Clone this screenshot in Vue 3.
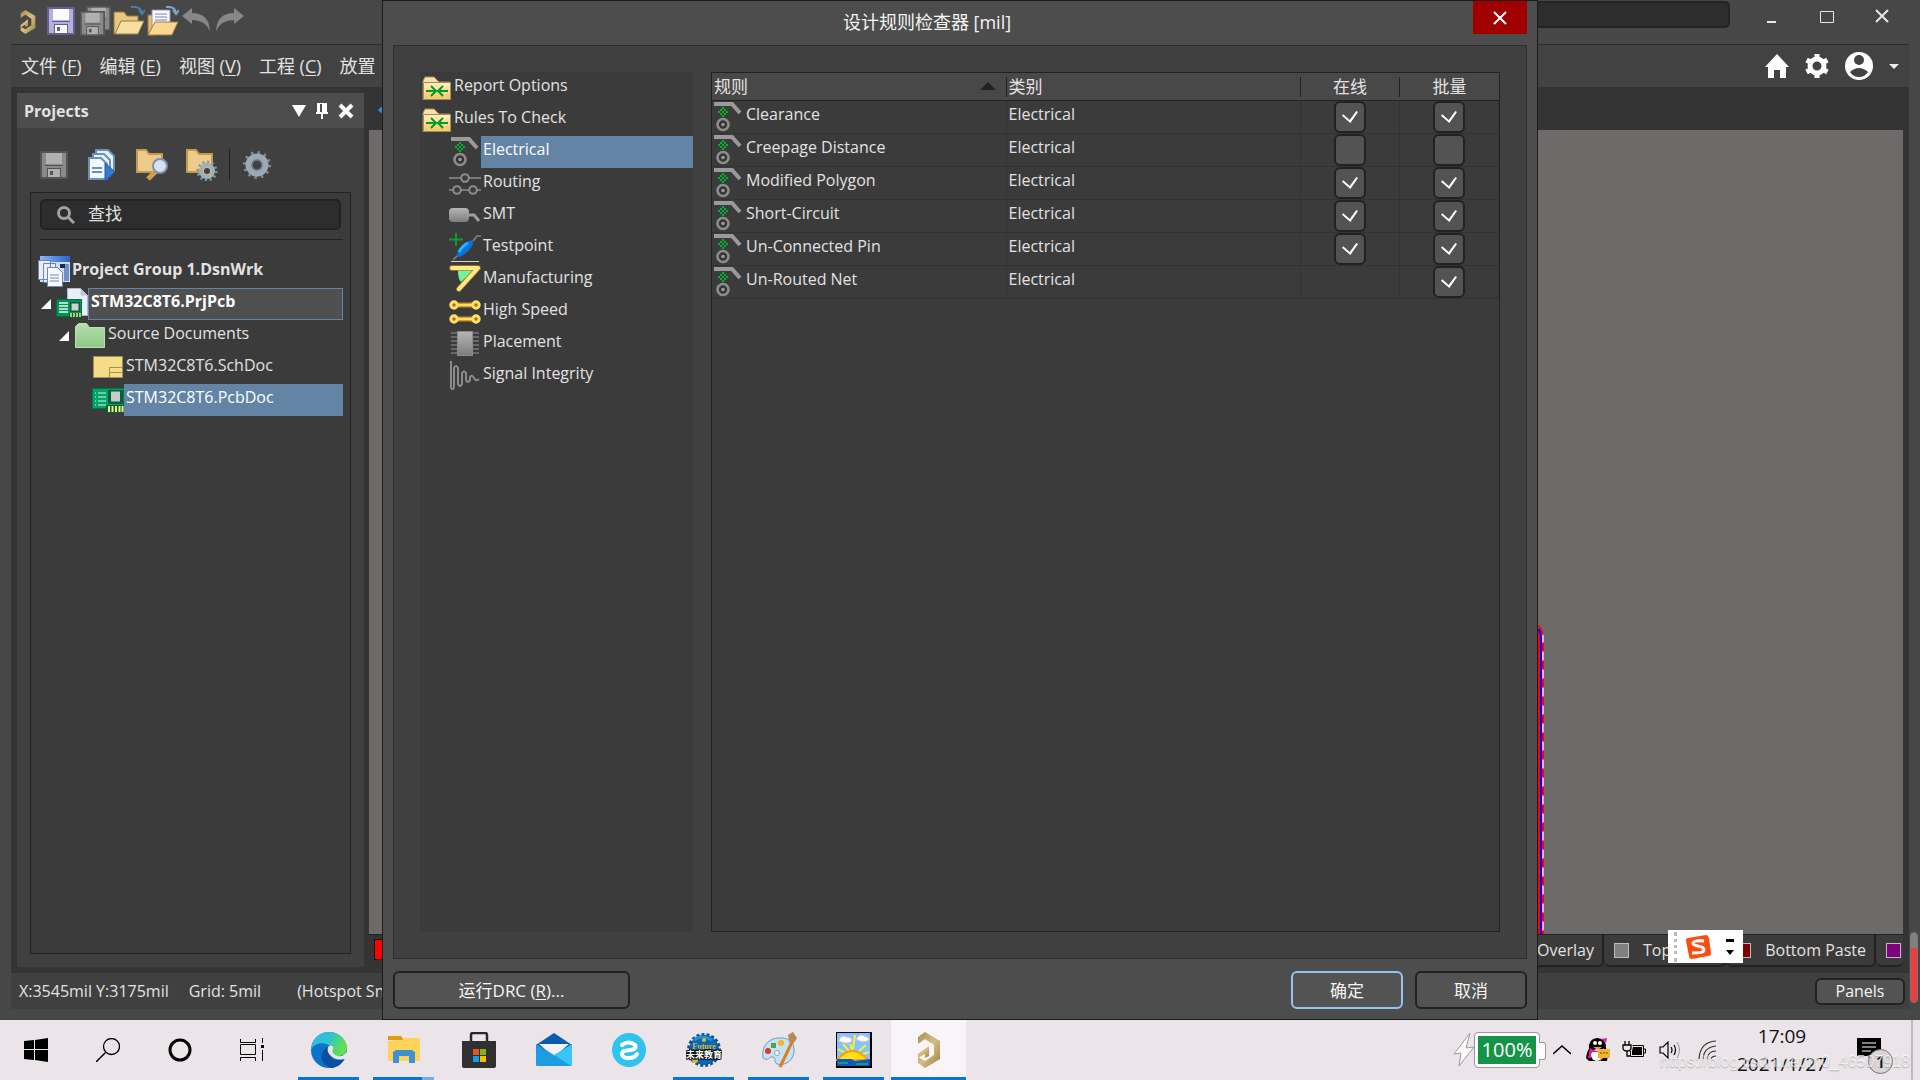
<template>
  <div class="desktop">
    <svg class="sprite" aria-hidden="true">
      <defs>
        <linearGradient id="g-folder" x1="0" y1="0" x2="0" y2="1">
          <stop offset="0" stop-color="#fff0c4" />
          <stop offset="1" stop-color="#f3c765" />
        </linearGradient>
        <linearGradient id="g-gray" x1="0" y1="0" x2="0" y2="1">
          <stop offset="0" stop-color="#b5b5b5" />
          <stop offset="1" stop-color="#7d7d7d" />
        </linearGradient>
        <linearGradient id="g-gold" x1="0" y1="0" x2="1" y2="1">
          <stop offset="0" stop-color="#a98e50" />
          <stop offset="0.5" stop-color="#d5bd84" />
          <stop offset="1" stop-color="#9c8040" />
        </linearGradient>
        <linearGradient id="g-green" x1="0" y1="0" x2="0" y2="1">
          <stop offset="0" stop-color="#b6dfae" />
          <stop offset="1" stop-color="#8fc983" />
        </linearGradient>
        <linearGradient id="g-blue" x1="0" y1="0" x2="1" y2="0">
          <stop offset="0" stop-color="#8db4f7" />
          <stop offset="1" stop-color="#2a62cf" />
        </linearGradient>
        <linearGradient id="g-edge" x1="0" y1="0" x2="1" y2="0.4">
          <stop offset="0" stop-color="#35b9ef" />
          <stop offset="0.5" stop-color="#2cc3d2" />
          <stop offset="1" stop-color="#62e24b" />
        </linearGradient>
      </defs>

      <symbol id="i-rules" viewBox="0 0 32 32">
        <path d="M2 27.500V9l2-4h9l5 5h11v17.500z" fill="#fbe0a8" stroke="#a58c58" />
        <path d="M2.500 10.500h27v17h-27z" fill="url(#g-folder)" stroke="#a58c58" />
        <path d="M5 19h9M10 14l5 5-5 5M27 19h-9M22 14l-5 5 5 5" fill="none" stroke="#009a24" stroke-width="2" />
      </symbol>
      <symbol id="i-electrical" viewBox="0 0 32 32">
        <path d="M2 3h18l8 9" fill="none" stroke="#9a9a9a" stroke-width="4" />
        <path d="M10 6h2v2h-2zM8 8h2v2H8zM12 8h2v2h-2zM6 10h2v2H6zM10 10h2v2h-2zM14 10h2v2h-2zM8 12h2v2H8zM12 12h2v2h-2zM10 14h2v2h-2z" fill="#00b52a" />
        <circle cx="11" cy="23.500" r="5.500" fill="#353535" stroke="#8d8d8d" stroke-width="2.600" />
        <circle cx="11" cy="23.500" r="1.800" fill="#9a9a9a" />
      </symbol>
      <symbol id="i-routing" viewBox="0 0 32 32">
        <g fill="none" stroke="#8e8e8e" stroke-width="2">
          <path d="M0 10h12M20 10h12M0 22h4M12 22h8M28 22h4" stroke-width="1.500" />
          <circle cx="16" cy="10" r="3.800" />
          <circle cx="8" cy="22" r="3.800" />
          <circle cx="24" cy="22" r="3.800" />
        </g>
      </symbol>
      <symbol id="i-smt" viewBox="0 0 32 32">
        <path d="M19 15h6l5 6" fill="none" stroke="#9e9e9e" stroke-width="3" />
        <rect x="0" y="8" width="20" height="14" rx="4" fill="url(#g-gray)" />
      </symbol>
      <symbol id="i-testpoint" viewBox="0 0 32 32">
        <path d="M2 29.500h28" stroke="#d7d7d7" />
        <path d="M4 28l5-5M24 9l4-5h4" fill="none" stroke="#858585" stroke-width="1.500" />
        <path d="M8 25c0-6 3-9 8-14 3-2 6-3 8-2 0 4-1 6-4 9-5 5-7 7-12 7z" fill="#0873dc" />
        <path d="M10 20c2-4 5-7 9-9" fill="none" stroke="#2cb5ff" stroke-width="3" />
        <path d="M7 1v13M0 7.500h14" stroke="#0b9c2c" stroke-width="2" />
      </symbol>
      <symbol id="i-manufacturing" viewBox="0 0 32 32">
        <path d="M9 6h16L12 18q-3-3-3-12z" fill="#6ff59c" />
        <path d="M3 4h26L10 25" fill="none" stroke="#ae8220" stroke-width="5.500" stroke-linecap="round" stroke-linejoin="round" />
        <path d="M3 4h26L10 25" fill="none" stroke="#ffe88a" stroke-width="4" stroke-linecap="round" stroke-linejoin="round" />
      </symbol>
      <symbol id="i-highspeed" viewBox="0 0 32 32">
        <path d="M6 9h20M6 23h20" stroke="#c58b16" stroke-width="5" />
        <path d="M6 9h20M6 23h20" stroke="#ffdc62" stroke-width="2.500" />
        <g fill="#a66e10" stroke="#ffe06a" stroke-width="3">
          <circle cx="5" cy="9" r="3.200" />
          <circle cx="27" cy="9" r="3.200" />
          <circle cx="5" cy="23" r="3.200" />
          <circle cx="27" cy="23" r="3.200" />
        </g>
      </symbol>
      <symbol id="i-placement" viewBox="0 0 32 32">
        <path d="M2 5h28M2 9h28M2 13h28M2 17h28M2 21h28M2 25h28" stroke="#777" stroke-width="1.500" />
        <rect x="8.500" y="3.500" width="15" height="24" fill="url(#g-gray)" stroke="#8a8a8a" />
      </symbol>
      <symbol id="i-signal" viewBox="0 0 32 32">
        <path d="M2 1v27q3 3 3-2V8q2-4 4 0v16q2 4 4 0V13q2-3 4 0v7q2 4 4 0v-3q2-3 4 1t5 1" fill="none" stroke="#8b8b8b" stroke-width="2" />
      </symbol>

      <symbol id="i-group" viewBox="0 0 32 32">
        <path d="M2 0h30v26H2z" fill="#cfdcf5" />
        <path d="M2 0h30v6H2z" fill="url(#g-blue)" />
        <path d="M26 8h5v17h-5z" fill="#6f8fc9" />
        <path d="M22 8h5v4h-5z" fill="#1f2b45" />
        <path d="M.5 4.500h12v19H.5zM5.500 7.500h12v19h-12z" fill="#e9eff9" stroke="#6c87b4" />
        <path d="M9.500 11.500h10l5 5v14h-15z" fill="#f6f9ff" stroke="#6c87b4" />
        <path d="M12 19h9M12 22h9M12 25h9" stroke="#6c87b4" />
      </symbol>
      <symbol id="i-project" viewBox="0 0 32 32">
        <path d="M11.500.5h13l7 7v20h-20z" fill="#e9eff6" stroke="#b2b6d4" />
        <path d="M24.500.5v7h7" fill="#b9c7dc" />
        <path d="M.5 11.500h25v17H.5z" fill="#00935a" stroke="#026d42" />
        <path d="M3 15h9M3 18h9M3 21h9M3 24h9" stroke="#eef7ee" stroke-width="1.500" />
        <path d="M14 14h10v10H14z" fill="#0a5d3d" />
        <path d="M15.500 15.500h7v7h-7z" fill="#cfd3cf" />
        <path d="M13 25h12v5H13z" fill="#0b5b3a" />
        <path d="M15 25v4M18 25v4M21 25v4M24 25v4" stroke="#f0ee7a" stroke-width="1.500" />
      </symbol>
      <symbol id="i-folder" viewBox="0 0 32 32">
        <path d="M1.500 27.500V6.500l3-3h8l3 4h15v20z" fill="url(#g-green)" stroke="#b9dfb3" />
      </symbol>
      <symbol id="i-sch" viewBox="0 0 32 32">
        <path d="M1.500 4.500h29v21h-29z" fill="#f5dd88" stroke="#a39053" />
        <path d="M17.500 25.500v-10h13M17.500 20.500h13" fill="none" stroke="#a39053" />
      </symbol>
      <symbol id="i-pcb" viewBox="0 0 32 32">
        <path d="M.5 4.500h31v20H.5z" fill="#00a56a" stroke="#02744a" />
        <path d="M6 9h8M6 13h8M6 17h8M6 21h8" stroke="#dff5ea" />
        <path d="M3 9h1M3 13h1M3 17h1M3 21h1" stroke="#dff5ea" />
        <path d="M16 6h15v14H16z" fill="#04603f" />
        <path d="M19 7.500h9v10h-9z" fill="#c7cdca" />
        <path d="M14 21h18v8H14z" fill="#0b5b3a" />
        <path d="M17 22v6M20.500 22v6M24 22v6M27.500 22v6M30.500 22v6" stroke="#f2ee7d" stroke-width="2" />
      </symbol>
      <symbol id="i-altium" viewBox="0 0 24 36">
        <path d="M1 5l7-5 15 9v18L8 36l-7-5v-6l7 4 9-6V13L8 7l-7 5z" fill="url(#g-gold)" />
        <path d="M1 22l11-8v10l-4 2v-4l-7 4z" fill="url(#g-gold)" />
      </symbol>
      <symbol id="i-save" viewBox="0 0 28 28">
        <path d="M0 0h28v28H0z" fill="currentColor" />
        <path d="M2 2h24v24H2z" fill="var(--disk)" />
        <path d="M6 2h16v11H6z" fill="var(--paper)" />
        <path d="M5 14h18v1H5zM7 17h14v9H7z" fill="currentColor" />
        <path d="M8 18h12v8H8z" fill="var(--paper)" />
        <path d="M10 20h3v4h-3z" fill="currentColor" />
      </symbol>
    </svg>

    <div class="main-window">
      <header class="toolbar">
        <svg class="logo" viewBox="0 0 24 36"><use href="#i-altium" /></svg>
        <div class="tools">
          <button class="tool" aria-label="保存"><svg class="disk" viewBox="0 0 32 30"><use href="#i-save" x="2" y="1" width="28" height="28" /></svg></button>
          <button class="tool" aria-label="全部保存">
            <svg class="disk off" viewBox="0 0 32 30">
              <use href="#i-save" x="7" y="0" width="25" height="25" />
              <use href="#i-save" x="1" y="5" width="25" height="25" />
            </svg>
          </button>
          <button class="tool" aria-label="打开">
            <svg viewBox="0 0 32 30">
              <path d="M1 28V6h10l3 4h11v18z" fill="#e7c67d" stroke="#8f7a45" />
              <path d="M8 15h23l-6 13H2z" fill="#f7dfa4" stroke="#8f7a45" />
              <path d="M18 1q10-1 11 6M26 4l3 4 3-4" fill="none" stroke="#4d7da3" stroke-width="2" />
            </svg>
          </button>
          <button class="tool" aria-label="打开文档">
            <svg viewBox="0 0 32 30">
              <path d="M1 29V9h7v20z" fill="#e9bc6e" stroke="#9a7c42" />
              <path d="M5 4h18v18H5z" fill="#fafbff" stroke="#8c93bd" />
              <path d="M8 8h12M8 11h12M8 14h12" stroke="#7b82ae" />
              <path d="M8 16h23l-6 13H1z" fill="#fbd690" stroke="#9a7c42" />
              <path d="M19 1q9-1 10 6M26 4l3 4 3-4" fill="none" stroke="#7ba6c7" stroke-width="2" />
            </svg>
          </button>
          <button class="tool" aria-label="撤销">
            <svg viewBox="0 0 32 30"><path d="M1 10l10-8v5q17 0 18 18-5-11-18-11v4z" fill="#878787" /></svg>
          </button>
          <button class="tool" aria-label="重做">
            <svg viewBox="0 0 32 30"><path d="M29 10L19 2v5Q2 7 1 25q5-11 18-11v4z" fill="#878787" /></svg>
          </button>
        </div>
        <input class="top-search" type="text" aria-label="搜索">
        <div class="window-buttons">
          <button aria-label="最小化"><svg viewBox="0 0 14 14"><path d="M2 13h9" /></svg></button>
          <button aria-label="最大化"><svg viewBox="0 0 14 14"><path d="M.5 2.500h13v11H.5z" stroke-width="1" /></svg></button>
          <button aria-label="关闭"><svg viewBox="0 0 14 14"><path d="M1 1l12 12M13 1L1 13" /></svg></button>
        </div>
      </header>

      <div class="window-frame">
        <nav class="menubar">
          <a v-for="m in menus" :key="m.name" href="#" class="menu-item">{{ m.name }}<span v-if="m.key"> (<u>{{ m.key }}</u>)</span></a>
          <div class="account">
            <a href="#" aria-label="主页"><svg width="24" height="26" viewBox="0 0 24 26"><path d="M12 1l12 13h-3v11h-6v-8H9v8H3V14H0z" fill="#fff" /></svg></a>
            <a href="#" aria-label="设置">
              <svg width="24" height="24" viewBox="0 0 24 24">
                <circle cx="12" cy="12" r="7" fill="none" stroke="#fff" stroke-width="5" />
                <path d="M12 0v4M12 20v4M1.600 6l3.500 2M18.900 16l3.500 2M1.600 18l3.500-2M18.900 8l3.500-2" stroke="#fff" stroke-width="5" />
              </svg>
            </a>
            <a href="#" aria-label="用户">
              <svg width="28" height="28" viewBox="0 0 28 28">
                <circle cx="14" cy="14" r="14" fill="#fff" />
                <circle cx="14" cy="8" r="5" fill="#424242" />
                <path d="M5 20q9-8 18 0-3 5-9 5t-9-5z" fill="#424242" />
              </svg>
            </a>
            <span class="caret"></span>
          </div>
        </nav>

        <main class="workspace">
          <aside class="panel">
            <div class="panel-header">
              <h2>Projects</h2>
              <svg width="14" height="12" viewBox="0 0 14 12"><path d="M0 0h14L7 12z" fill="#fff" /></svg>
              <svg width="12" height="18" viewBox="0 0 12 18"><path d="M1 1h10v9h1v2H7v5H5v-5H0v-2h1zM4 2v8h2V2z" fill="#fff" fill-rule="evenodd" /></svg>
              <svg width="16" height="16" viewBox="0 0 16 16"><path d="M2 2l12 12M14 2L2 14" stroke="#fff" stroke-width="4" /></svg>
            </div>
            <div class="panel-tools">
              <svg class="disk off" width="28" height="28" viewBox="0 0 28 28"><use href="#i-save" /></svg>
              <svg width="32" height="32" viewBox="-2 0 32 32">
                <path d="M8 1h12l6 6v16H8z" fill="#e8f2fc" stroke="#6b90bd" stroke-width="2" />
                <path d="M5 5h11l6 6v16H5z" fill="#e8f2fc" stroke="#6b90bd" stroke-width="2" />
                <path d="M1 9h12l6 6v15H1z" fill="#f4f9ff" stroke="#6b90bd" stroke-width="2" />
                <path d="M4 19h10M4 23h10" stroke="#6b90bd" stroke-width="2" />
                <path d="M17 14l10 9-10 9z" fill="#3a78cf" stroke="#1f56a8" />
              </svg>
              <svg width="32" height="32" viewBox="0 0 32 32">
                <path d="M1 23V1h9l3 4h13v18z" fill="#eccb8c" stroke="#c29a4c" stroke-width="2" />
                <path d="M20 22l-8 8" stroke="#c9a055" stroke-width="5" />
                <circle cx="24" cy="17" r="7" fill="#d4e3f3" stroke="#7e93a8" stroke-width="2" />
              </svg>
              <svg width="32" height="32" viewBox="0 0 32 32">
                <path d="M1 23V1h9l3 4h13v18z" fill="#eccb8c" stroke="#c29a4c" stroke-width="2" />
                <circle cx="21" cy="22" r="9" fill="none" stroke="#8197a3" stroke-width="3" stroke-dasharray="2 2.700" />
                <circle cx="21" cy="22" r="6" fill="#d7b779" stroke="#9fb0ba" stroke-width="4" />
                <circle cx="21" cy="22" r="3" fill="#404040" />
              </svg>
              <span class="separator"></span>
              <svg width="28" height="28" viewBox="0 0 28 28">
                <circle cx="14" cy="14" r="12" fill="none" stroke="#7f8d95" stroke-width="4" stroke-dasharray="2.300 4" />
                <circle cx="14" cy="14" r="8" fill="none" stroke="#9aaab3" stroke-width="7" />
                <circle cx="14" cy="14" r="5" fill="none" stroke="#64747d" stroke-width="1.500" />
              </svg>
            </div>
            <div class="panel-box">
              <div class="search">
                <svg width="18" height="18" viewBox="0 0 18 18"><circle cx="7" cy="7" r="5.500" fill="none" stroke="#a0a0a0" stroke-width="3" /><path d="M11 11l6 6" stroke="#a0a0a0" stroke-width="3" /></svg>
                <input type="text" placeholder="查找" aria-label="查找">
              </div>
              <ul class="tree project-tree">
                <li v-for="n in projectTree" :key="n.label" class="node" :class="[n.kind, 'level-' + n.level]">
                  <span v-if="n.open" class="expander"></span>
                  <svg class="node-icon" viewBox="0 0 32 32"><use :href="'#i-' + n.icon" /></svg>
                  <span class="node-label">{{ n.label }}</span>
                </li>
              </ul>
            </div>
          </aside>

          <section class="editor">
            <div class="doc-tabs"><span class="doc-mark"></span></div>
            <div class="canvas">
              <svg class="board" width="6" height="309" viewBox="0 0 6 309">
                <path d="M1 6v303" stroke="#f00" stroke-width="2" />
                <path d="M5 10v299" stroke="#f2b0ae" stroke-width="2" />
                <path d="M0 1q5 2 5 18v290" fill="none" stroke="#f00" stroke-width="2" stroke-dasharray="9 9" />
                <path d="M0 4q3 2 3 10v295" fill="none" stroke="#00f" stroke-width="2" />
              </svg>
            </div>
            <div class="layer-tabs">
              <span class="swatch current"></span>
              <span class="layer-spacer"></span>
              <span v-for="l in layers" :key="l.id" class="layer" :class="l.id">
                <i class="swatch"></i>{{ l.name }}
              </span>
            </div>
          </section>
        </main>

        <footer class="status">
          <span>X:3545mil Y:3175mil</span>
          <span>Grid: 5mil</span>
          <span class="snap">(Hotspot Snap)</span>
          <button class="btn panels">Panels</button>
        </footer>
      </div>
      <div class="side-scroll"></div>
    </div>

    <section class="dialog" role="dialog" aria-labelledby="dialog-title">
      <header class="dialog-title">
        <h1 id="dialog-title">设计规则检查器 [mil]</h1>
        <button class="dialog-close" aria-label="关闭">
          <svg width="14" height="14" viewBox="0 0 14 14"><path d="M1 1l12 12M13 1L1 13" stroke="#fff" stroke-width="2" /></svg>
        </button>
      </header>
      <div class="dialog-body">
        <ul class="tree rule-tree">
          <li v-for="n in ruleTree" :key="n.label" class="node" :class="{ child: n.child, selected: n.label === current }" @click="current = n.label">
            <svg class="node-icon" viewBox="0 0 32 32"><use :href="'#i-' + n.icon" /></svg>
            <span class="node-label">{{ n.label }}</span>
          </li>
        </ul>
        <div class="grid-box">
          <table>
            <colgroup>
              <col>
              <col>
              <col class="col-check">
              <col class="col-check">
            </colgroup>
            <thead>
              <tr>
                <th><div class="th">规则<span class="sort"></span></div></th>
                <th><div class="th">类别</div></th>
                <th><div class="th center">在线</div></th>
                <th><div class="th center">批量</div></th>
              </tr>
            </thead>
            <tbody>
              <tr v-for="r in rules" :key="r.name">
                <td>
                  <div class="cell">
                    <svg class="rule-icon" viewBox="0 0 32 32"><use href="#i-electrical" /></svg>
                    <span>{{ r.name }}</span>
                  </div>
                </td>
                <td><div class="cell category">Electrical</div></td>
                <td><input v-if="r.online !== null" v-model="r.online" type="checkbox" :aria-label="r.name + ' 在线'"></td>
                <td><input v-model="r.batch" type="checkbox" :aria-label="r.name + ' 批量'"></td>
              </tr>
            </tbody>
          </table>
        </div>
      </div>
      <footer class="dialog-footer">
        <button class="btn run">运行DRC (<u>R</u>)...</button>
        <button class="btn ok">确定</button>
        <button class="btn cancel">取消</button>
      </footer>
    </section>

    <div class="ime">
      <span class="grip"></span>
      <svg width="26" height="26" viewBox="0 0 26 26">
        <path d="M3 4l18-3q2 0 3 3l2 15q0 3-3 3L7 25q-3 0-3-3L1 7q0-3 2-3z" fill="#ff4b0f" />
        <path d="M19 7q-11-1-11 2.500c0 3 11 2 11 6S11 19 7 19" fill="none" stroke="#fff" stroke-width="3" />
      </svg>
      <svg class="ime-menu" width="8" height="16" viewBox="0 0 8 16"><path d="M0 0h8v3H0zM0 11h8l-4 5z" fill="#000" /></svg>
    </div>

    <footer class="taskbar">
      <div class="system">
        <button aria-label="开始"><svg width="24" height="24" viewBox="0 0 24 24"><path d="M0 3l10-1v9H0zM11 2l13-2v11H11zM0 12h10v10L0 21zM11 12h13v12l-13-2z" /></svg></button>
        <button aria-label="搜索"><svg width="24" height="24" viewBox="0 0 24 24"><circle cx="15.500" cy="8.500" r="8" fill="none" stroke="#000" stroke-width="1.300" /><path d="M0 24l9.500-9.500" stroke="#000" stroke-width="1.500" /></svg></button>
        <button aria-label="Cortana"><svg width="24" height="24" viewBox="0 0 24 24"><circle cx="12" cy="12" r="10" fill="none" stroke="#000" stroke-width="3" /></svg></button>
        <button aria-label="任务视图"><svg width="24" height="24" viewBox="0 0 24 24"><path d="M.5 1v3.500h15V1M.5 6.500h15v10H.5zM.5 23v-3.500h15V23M22.500 0v5M22.500 12v11" fill="none" stroke="#000" /><path d="M21 7h3v3h-3z" /></svg></button>
      </div>
      <div class="apps">
        <button class="app open" aria-label="Edge">
          <svg width="36" height="36" viewBox="0 0 36 36">
            <circle cx="18" cy="18" r="18" fill="#0b72cd" />
            <path d="M0 17C1 7 8 0 18 0c11 0 18 8 18 16 0 7-8 10-14 7-3-2 0-3-1-6-2-6-14-9-21 0z" fill="url(#g-edge)" />
            <path d="M14 17c-7 6-3 17 7 19 6-1 10-4 13-10-4 3-10 3-13 0-3-2-4-6-2-10-2-1-4 0-5 1z" fill="#0c4f9c" />
            <path d="M18 14c3-1 5 1 4 3-2 4 2 8 9 7l5-4v7h-3q-8 2-14-4c-3-3-3-7-1-9z" fill="#ebe4e9" />
          </svg>
        </button>
        <button class="app open stacked" aria-label="文件资源管理器">
          <svg width="32" height="28" viewBox="0 0 32 28">
            <path d="M0 0h13l3 4H0z" fill="#dc9b13" />
            <path d="M0 5l14-1 2-2h14l2 1v22H0z" fill="#ffd35a" />
            <path d="M5 27V16l3-2h16l3 2v11h-6v-7H11v7z" fill="#3b91d4" />
          </svg>
        </button>
        <button class="app" aria-label="Store">
          <svg width="34" height="36" viewBox="0 0 34 36">
            <path d="M9 10V3q0-2 2-2h12q2 0 2 2v7" fill="none" stroke="#2a2a2a" stroke-width="2.500" />
            <path d="M0 9h34v25q0 2-2 2H2q-2 0-2-2z" fill="#303030" />
            <path d="M11 17h6v6h-6z" fill="#f25022" /><path d="M18 17h6v6h-6z" fill="#7fba00" /><path d="M11 24h6v6h-6z" fill="#00a4ef" /><path d="M18 24h6v6h-6z" fill="#ffb900" />
          </svg>
        </button>
        <button class="app" aria-label="邮件">
          <svg width="36" height="34" viewBox="0 0 36 34">
            <path d="M0 12L18 0l18 12v20H0z" fill="#0a5cad" />
            <path d="M3 11h30L18 24z" fill="#f3f3f3" />
            <path d="M0 11l36 22H1q-1 0-1-1z" fill="#1d9ce2" /><path d="M36 11v21q0 1-1 1L18 22z" fill="#38c5f7" />
          </svg>
        </button>
        <button class="app" aria-label="浏览器">
          <svg width="34" height="34" viewBox="0 0 34 34">
            <circle cx="17" cy="17" r="17" fill="#2fc3ee" />
            <path d="M10 12q7-5 13 0c3 5-5 5-11 6-5 3 0 8 5 7q6 0 8-4" fill="none" stroke="#fff" stroke-width="4" stroke-linecap="round" />
          </svg>
        </button>
        <button class="app open" aria-label="未来教育">
          <svg width="36" height="36" viewBox="0 0 36 36">
            <circle cx="18" cy="18" r="15" fill="#0966b3" />
            <circle cx="18" cy="18" r="15.500" fill="none" stroke="#0b5798" stroke-width="3" stroke-dasharray="3 2" />
            <path d="M8 8q8-6 18 0" fill="none" stroke="#2390dc" stroke-width="3" />
            <circle cx="18" cy="8" r="2" fill="#e3bb24" /><circle cx="9" cy="28" r="3" fill="#e3bb24" />
            <text x="18" y="17" class="future-en">Future</text>
            <text x="18" y="26" class="future-cn">未来教育</text>
          </svg>
        </button>
        <button class="app open" aria-label="画图">
          <svg width="36" height="36" viewBox="0 0 36 36">
            <path d="M2 26C0 14 8 6 18 6c10-1 16 5 15 14-1 9-9 14-17 12-4-2 0-6-4-7s-5 5-10 1z" fill="#c4e2f3" stroke="#6d9dbd" />
            <circle cx="7" cy="19" r="3" fill="#d8382f" /><path d="M10 11h5v5h-5z" fill="#4ca83f" /><circle cx="20" cy="11" r="3" fill="#f5b32a" /><circle cx="16" cy="21" r="2.500" fill="#f6f6f6" stroke="#87a8bd" />
            <path d="M31 10L19 35" stroke="#dd7d21" stroke-width="3" /><path d="M27 3l5-3 4 6-4 6-4-2z" fill="#b88955" />
          </svg>
        </button>
        <button class="app open" aria-label="图片">
          <svg width="36" height="36" viewBox="0 0 36 36">
            <path d="M0 0h36v36H0z" /><path d="M1 1h33v33H1z" fill="#7fc6ff" />
            <path d="M2 17l9 5M7 12l6 7M19 3l-2 14M30 13l-7 6M33 20l-9 3M14 12l2 6" stroke="#ffee2e" stroke-width="2" />
            <path d="M3 8q3-6 7-3 6 0 6 4-4 4-13 0zM20 7q4-6 8-3 6 2 5 4-6 4-13-1z" fill="#fff" stroke="#f4b2dd" />
            <path d="M1 28Q16 10 32 28z" fill="#ffe30f" stroke="#ff9b16" stroke-width="2" />
            <path d="M1 27h14l4 2 15-2v7H1z" fill="#0b58c4" /><path d="M2 31h10M20 32h12" stroke="#0e9b80" stroke-width="2" />
          </svg>
        </button>
        <button class="app open active" aria-label="Altium"><svg width="24" height="36" viewBox="0 0 24 36"><use href="#i-altium" /></svg></button>
      </div>
      <div class="tray">
        <svg width="22" height="36" viewBox="0 0 22 36"><path d="M17 1L1 22l7-1-2 13L21 15l-8 1z" fill="#fff" stroke="#9b9b9b" /></svg>
        <div class="battery">100%</div>
        <svg class="chevron" width="18" height="10" viewBox="0 0 18 10"><path d="M0 9l9-8 9 8" fill="none" stroke="#000" stroke-width="1.500" /></svg>
        <svg class="qq" width="24" height="24" viewBox="0 0 24 24">
          <path d="M0 20q1-7 3-9-1-10 8-11 9 0 9 10 3 5 1 13H3z" /><ellipse cx="11" cy="17" rx="6" ry="6" fill="#fff" />
          <path d="M4 10q8 6 14 0v4H5v6H2z" fill="#ef14b5" /><circle cx="9" cy="5" r="2" fill="#fff" /><circle cx="14" cy="5" r="2" fill="#fff" /><path d="M7 9h9l-4 3z" fill="#f3a31a" />
          <path d="M15 1l6-1-1 5z" fill="#ef14b5" /><path d="M12 11h12v9h-7l-3 3v-3h-2z" fill="#eeb52f" /><path d="M14 15h8" stroke="#7b4200" stroke-dasharray="2 1" />
        </svg>
        <svg class="plug" width="24" height="18" viewBox="0 0 24 18"><path d="M3 0v4M7 0v4M1 4h8v3q0 3-4 3t-4-3zM5 10v5h3" fill="none" stroke="#000" stroke-width="1.300" /><path d="M10.500 4.500h11v11h-13V10M22 8h1.500v4H22" fill="none" stroke="#000" /><path d="M11 6h9v8H10v-4z" /></svg>
        <svg class="speaker" width="22" height="18" viewBox="0 0 22 18"><path d="M1 6h3l5-5v16l-5-5H1zM12 6q2 3 0 6M15 4q3 5 0 10" fill="none" stroke="#000" stroke-width="1.200" /><path d="M18 1q5 8 0 16" fill="none" stroke="#999" /></svg>
        <svg class="wifi" width="19" height="20" viewBox="0 0 19 20"><path d="M1 19Q2 2 18 1M5 19Q6 7 18 6M9 19q1-8 9-8M13 19q1-3 5-3" fill="none" stroke="#333" stroke-width="1.200" /></svg>
        <div class="clock"><span>17:09</span><span>2021/1/27</span></div>
        <div class="notice">
          <svg width="24" height="24" viewBox="0 0 24 24"><path d="M0 0h24v18h-8v6l-6-6H0z" /><path d="M5 5h14M5 9h14M5 13h9" stroke="#fff" /></svg>
          <span class="badge">1</span>
        </div>
      </div>
      <span class="watermark">https://blog.csdn.net/m0_46507918</span>
    </footer>
  </div>
</template>

<script setup>
import { ref } from 'vue'

const menus = [
  { name: '文件', key: 'F' },
  { name: '编辑', key: 'E' },
  { name: '视图', key: 'V' },
  { name: '工程', key: 'C' },
  { name: '放置', key: '' }
]

const projectTree = [
  { label: 'Project Group 1.DsnWrk', icon: 'group', level: 0, kind: 'bold' },
  { label: 'STM32C8T6.PrjPcb', icon: 'project', level: 1, kind: 'focused', open: true },
  { label: 'Source Documents', icon: 'folder', level: 2, kind: '', open: true },
  { label: 'STM32C8T6.SchDoc', icon: 'sch', level: 3, kind: '' },
  { label: 'STM32C8T6.PcbDoc', icon: 'pcb', level: 3, kind: 'selected' }
]

const layers = [
  { id: 'first', name: 'Overlay' },
  { id: 'top-paste', name: 'Top Paste' },
  { id: 'bottom-paste', name: 'Bottom Paste' },
  { id: 'last', name: '' }
]

const current = ref('Electrical')

const ruleTree = [
  { label: 'Report Options', icon: 'rules' },
  { label: 'Rules To Check', icon: 'rules' },
  { label: 'Electrical', icon: 'electrical', child: true },
  { label: 'Routing', icon: 'routing', child: true },
  { label: 'SMT', icon: 'smt', child: true },
  { label: 'Testpoint', icon: 'testpoint', child: true },
  { label: 'Manufacturing', icon: 'manufacturing', child: true },
  { label: 'High Speed', icon: 'highspeed', child: true },
  { label: 'Placement', icon: 'placement', child: true },
  { label: 'Signal Integrity', icon: 'signal', child: true }
]

// online: null — 该规则不支持在线检查
const rules = ref([
  { name: 'Clearance', online: true, batch: true },
  { name: 'Creepage Distance', online: false, batch: false },
  { name: 'Modified Polygon', online: true, batch: true },
  { name: 'Short-Circuit', online: true, batch: true },
  { name: 'Un-Connected Pin', online: true, batch: true },
  { name: 'Un-Routed Net', online: null, batch: true }
])
</script>

<style>
body {
  margin: 0;
  background: #474747;
}
</style>

<style scoped>
.desktop {
  position: relative;
  display: flex;
  flex-direction: column;
  height: 100vh;
  overflow: hidden;
  font-family: "Open Sans", "Noto Sans CJK SC", sans-serif;
  font-size: 16px;
  color: #e2e2e2;
}

.desktop * {
  box-sizing: border-box;
}

.sprite {
  position: absolute;
  width: 0;
  height: 0;
}

svg {
  display: block;
  flex: none;
}

button {
  padding: 0;
  border: 0;
  background: none;
  font: inherit;
  color: inherit;
}

a {
  color: inherit;
  text-decoration: none;
}

u {
  text-underline-offset: 2px;
}

h1,
h2 {
  margin: 0;
}

/* main window */
.main-window {
  position: relative;
  flex: 1;
  min-height: 0;
  display: flex;
  flex-direction: column;
  padding: 0 11px 11px;
  background: #474747;
}

.toolbar {
  display: flex;
  align-items: flex-start;
  height: 45px;
  border-bottom: 1px solid #2c2c2c;
}

.logo {
  width: 16px;
  height: 24px;
  margin: 10px 0 0 9px;
}

.tools {
  display: flex;
  gap: 2px;
  margin: 6px 0 0 9px;
}

.tool svg {
  width: 32px;
  height: 30px;
}

.disk {
  color: #62608f;
  --disk: #b3b0e0;
  --paper: #fafaff;
}

.disk.off {
  color: #555;
  --disk: #8a8a8a;
  --paper: #b0b0b0;
}

.top-search {
  width: 420px;
  height: 27px;
  margin: 1px 35px 0 auto;
  border: 2px solid #242424;
  border-radius: 5px;
  background: #2d2d2d;
}

.window-buttons {
  display: flex;
  gap: 41px;
  margin: 9px 20px 0 0;
}

.window-buttons svg {
  width: 14px;
  height: 14px;
  fill: none;
  stroke: #e6e6e6;
  stroke-width: 2;
}

.window-frame {
  flex: 1;
  min-height: 0;
  display: flex;
  flex-direction: column;
  background: #343434;
}

.menubar {
  display: flex;
  align-items: center;
  gap: 18px;
  height: 42px;
  padding: 0 10px;
  background: #424242;
}

.menu-item {
  padding-bottom: 2px;
  font-size: 18px;
  white-space: nowrap;
}

.account {
  display: flex;
  align-items: center;
  gap: 16px;
  margin-left: auto;
}

.caret {
  border: 5px solid transparent;
  border-top-color: #eee;
  border-bottom: 0;
}

.workspace {
  flex: 1;
  min-height: 0;
  display: flex;
  gap: 5px;
  padding: 6px;
}

/* projects panel */
.panel {
  flex: none;
  width: 347px;
  display: flex;
  flex-direction: column;
  background: #404040;
}

.panel-header {
  display: flex;
  align-items: center;
  gap: 10px;
  height: 35px;
  padding: 0 10px 0 7px;
  background: #4d4d4d;
}

.panel-header h2 {
  margin-right: auto;
  font-size: 16px;
  font-weight: 700;
}

.panel-tools {
  display: flex;
  align-items: center;
  gap: 18px;
  height: 64px;
  padding: 10px 0 0 23px;
}

.separator {
  width: 1px;
  height: 32px;
  margin: 0 -5px 0 -7px;
  background: #1f1f1f;
}

.panel-box {
  flex: 1;
  margin: 0 13px 13px;
  padding: 6px 7px 0 9px;
  border: 1px solid #222;
  background: #3b3b3b;
}

.search {
  display: flex;
  align-items: center;
  gap: 13px;
  height: 31px;
  margin-right: 2px;
  padding: 0 15px;
  border: 2px solid #222;
  border-radius: 5px;
  background: #2d2d2d;
}

.search input {
  flex: 1;
  min-width: 0;
  padding: 0 0 2px;
  border: 0;
  outline: 0;
  background: none;
  font: inherit;
  font-size: 17px;
  color: #e2e2e2;
}

.search input::placeholder {
  color: #e2e2e2;
}

.tree {
  margin: 0;
  padding: 0;
  list-style: none;
}

.node {
  display: flex;
  height: 32px;
}

.node-icon {
  width: 32px;
  height: 32px;
}

.node-label {
  flex: 1;
  padding-left: 2px;
  line-height: 27px;
  white-space: nowrap;
}

.selected .node-label {
  background: #6384a4;
  color: #fff;
}

.project-tree {
  margin-top: 9px;
  padding-top: 16px;
  border-top: 1px solid #222;
}

.bold .node-label,
.focused .node-label {
  font-weight: 700;
}

.focused .node-label {
  line-height: 25px;
  border: 1px solid #6384a4;
  background: #4f4f4f;
  color: #fff;
}

.project-tree .level-0 {
  margin-left: -2px;
}

.project-tree .level-1 {
  padding-left: 1px;
}

.project-tree .level-2 {
  padding-left: 19px;
}

.project-tree .level-3 {
  padding-left: 52px;
}

.expander {
  width: 10px;
  height: 10px;
  margin: 11px 5px 0 0;
  background: #fff;
  clip-path: polygon(100% 0, 100% 100%, 0 100%);
}

/* editor */
.editor {
  flex: 1;
  min-width: 0;
  display: flex;
  flex-direction: column;
}

.doc-tabs {
  height: 37px;
  padding: 14px 9px;
}

.doc-mark {
  display: block;
  width: 8px;
  height: 6px;
  background: #2f8eea;
  clip-path: polygon(0 50%, 40% 0, 100% 0, 100% 100%, 40% 100%);
}

.canvas {
  position: relative;
  flex: 1;
  background: #6e6a69;
}

.board {
  position: absolute;
  right: 359px;
  bottom: 0;
}

.layer-tabs {
  display: flex;
  align-items: flex-start;
  height: 33px;
  border-top: 1px solid #222;
  overflow: hidden;
}

.layer {
  display: flex;
  align-items: center;
  gap: 14px;
  height: 32px;
  padding: 0 8px 0 10px;
  border: 0 solid #222;
  border-width: 0 2px 2px 0;
  border-radius: 0 0 6px 6px;
  background: #3b3b3b;
  white-space: nowrap;
}

.layer-spacer {
  flex: 1;
}

.layer.last {
  gap: 0;
  padding-right: 2px;
  border-right: 0;
}

.swatch {
  width: 15px;
  height: 15px;
  border: 1px solid #bbb;
  background: #808080;
}

.swatch.current {
  width: 21px;
  height: 21px;
  margin: 4px 0 0 5px;
  border-color: #111;
  background: #f00;
}

.bottom-paste .swatch {
  background: #800000;
}

.last .swatch {
  background: #800080;
}

.status {
  display: flex;
  align-items: center;
  gap: 20px;
  height: 36px;
  padding: 0 4px 0 8px;
  background: #404040;
  white-space: nowrap;
}

.snap {
  margin-left: 16px;
}

.side-scroll {
  position: absolute;
  right: 2px;
  bottom: 17px;
  width: 8px;
  height: 71px;
  border: 1px solid #777;
  border-radius: 4px;
  background: linear-gradient(#808080 15px, #f23c3c 15px);
}

.btn {
  border: 2px solid #222;
  border-radius: 6px;
  background: #535353;
  color: #f4f4f4;
}

.panels {
  width: 90px;
  height: 27px;
  margin-left: auto;
  line-height: 20px;
}

/* dialog */
.dialog {
  position: absolute;
  top: 0;
  right: 382px;
  bottom: 60px;
  left: 382px;
  display: flex;
  flex-direction: column;
  padding: 0 10px;
  border: 1px solid #1c1c1c;
  background: #4d4d4d;
}

.dialog-title {
  display: flex;
  height: 44px;
}

.dialog-title h1 {
  flex: 1;
  padding-right: 12px;
  font-size: 18px;
  font-weight: 400;
  line-height: 42px;
  text-align: center;
  color: #f4f4f4;
}

.dialog-close {
  display: flex;
  align-items: center;
  justify-content: center;
  width: 54px;
  height: 33px;
  background: #a00000;
}

.dialog-body {
  flex: 1;
  min-height: 0;
  display: flex;
  gap: 18px;
  padding: 26px;
  border: 1px solid #2e2e2e;
  background: #404040;
}

.rule-tree {
  width: 273px;
  background: #3b3b3b;
}

.rule-tree .node-icon {
  margin-left: 1px;
}

.rule-tree .child .node-icon {
  margin-left: 29px;
}

.rule-tree .node-label {
  padding-left: 1px;
}

.rule-tree .child .node-label {
  padding-left: 2px;
}

.grid-box {
  flex: 1;
  border: 1px solid #222;
  background: #3b3b3b;
}

table {
  width: 100%;
  table-layout: fixed;
  border-collapse: separate;
  border-spacing: 0;
}

.col-check {
  width: 99px;
}

th {
  height: 28px;
  padding: 0;
  border-bottom: 1px solid #222;
  background: #484848;
  font-size: 17px;
  font-weight: 400;
  text-align: left;
}

.th {
  display: flex;
  align-items: center;
  justify-content: space-between;
  height: 20px;
  padding: 0 10px 2px 2px;
  border-right: 1px solid #222;
}

th:last-child .th {
  border-right: 0;
}

.th.center {
  justify-content: center;
  padding: 0 0 2px;
}

.sort {
  border: 8px solid transparent;
  border-top: 0;
  border-bottom-color: #222;
}

td {
  height: 33px;
  padding: 0;
  border-right: 1px solid #333;
  border-bottom: 1px solid #333;
  text-align: center;
}

.cell {
  display: flex;
  height: 32px;
  gap: 2px;
  line-height: 26px;
}

.category {
  padding-left: 2px;
}

.rule-icon {
  width: 32px;
  height: 32px;
}

input[type="checkbox"] {
  appearance: none;
  display: block;
  width: 32px;
  height: 32px;
  margin: 0 auto;
  border: 2px solid #222;
  border-radius: 6px;
  background: #535353;
}

input[type="checkbox"]:checked::before {
  content: "";
  display: block;
  width: 16px;
  height: 12px;
  margin: 8px 6px;
  background: #fff;
  clip-path: polygon(0 40%, 8% 28%, 48% 76%, 90% 0, 100% 8%, 52% 100%);
}

.dialog-footer {
  display: flex;
  gap: 12px;
  padding: 12px 0 10px;
}

.dialog-footer .btn {
  width: 112px;
  height: 38px;
  padding-bottom: 2px;
  font-size: 17px;
}

.dialog-footer .run {
  width: 237px;
  margin-right: auto;
}

.dialog-footer .ok {
  border-color: #94c4f2;
}

/* input method bar */
.ime {
  position: absolute;
  right: 177px;
  bottom: 117px;
  display: flex;
  align-items: center;
  gap: 8px;
  width: 75px;
  height: 33px;
  padding: 0 9px 0 6px;
  background: #fff;
}

.ime-menu {
  margin-left: auto;
}

.grip {
  height: 30px;
  border-left: 3px dotted #bbb;
}

/* taskbar */
.taskbar {
  position: relative;
  display: flex;
  justify-content: space-between;
  height: 60px;
  background: #ebe4e9;
  color: #111;
}

.system,
.apps {
  display: flex;
}

.system button {
  display: flex;
  align-items: center;
  justify-content: center;
  width: 72px;
}

.apps {
  margin: 0 auto 0 3px;
}

.app {
  display: flex;
  align-items: center;
  justify-content: center;
  width: 75px;
  border-bottom: 3px solid transparent;
  padding-top: 3px;
}

.app.open {
  background: linear-gradient(#0078d7, #0078d7) center bottom / 61px 3px no-repeat border-box;
}

.app.stacked {
  background-image: linear-gradient(90deg, #0078d7 49px, #6db0e8 49px);
}

.app.open.active {
  border-bottom-color: #0078d7;
  background: #f8f4f8;
}

.future-en {
  font: bold 8px "Liberation Serif", serif;
  text-anchor: middle;
  fill: #d9bd22;
}

.future-cn {
  font: bold 9px "Noto Sans CJK SC", sans-serif;
  text-anchor: middle;
  fill: #fff;
  stroke: #111;
  stroke-width: 2px;
  paint-order: stroke;
}

.tray {
  display: flex;
  align-items: center;
  padding-right: 19px;
  margin-right: 7px;
  border-right: 2px solid #bdb8bd;
}

.battery {
  position: relative;
  width: 64px;
  height: 34px;
  margin-right: 14px;
  border: 3px solid #fff;
  border-radius: 3px;
  outline: 1px solid #999;
  background: #159447;
  font-size: 20px;
  line-height: 27px;
  text-align: center;
  color: #fff;
}

.battery::after {
  content: "";
  position: absolute;
  top: 6px;
  left: 61px;
  width: 6px;
  height: 16px;
  border: 1px solid #999;
  border-left: 0;
  border-radius: 0 3px 3px 0;
  background: #fff;
}

.qq {
  margin-left: 15px;
}

.plug {
  margin-left: 12px;
}

.speaker {
  margin-left: 13px;
}

.wifi {
  margin-left: 17px;
}

.clock {
  display: flex;
  flex-direction: column;
  align-items: center;
  width: 130px;
  font-size: 19px;
  line-height: 28px;
}

.notice {
  position: relative;
  width: 45px;
  padding-left: 10px;
}

.badge {
  position: absolute;
  top: 11px;
  left: 21px;
  width: 25px;
  height: 25px;
  border: 1px solid #777;
  border-radius: 50%;
  background: #d9d5d9;
  font-size: 17px;
  font-weight: 600;
  line-height: 23px;
  text-align: center;
}

.watermark {
  position: absolute;
  right: 10px;
  bottom: 9px;
  font-family: "Liberation Sans", sans-serif;
  font-size: 16px;
  color: rgba(255, 255, 255, 0.7);
  text-shadow: 0 1px 1px rgba(120, 120, 120, 0.5);
  pointer-events: none;
}
</style>
